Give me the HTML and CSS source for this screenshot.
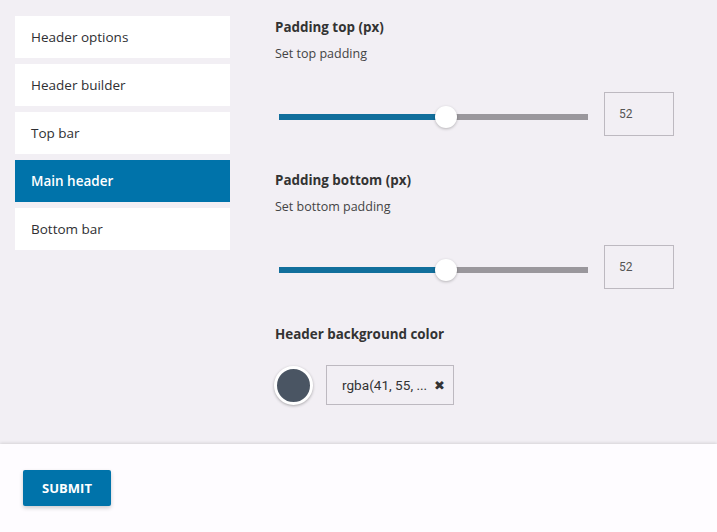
FILE: index.html
```html
<!DOCTYPE html>
<html>
<head>
<meta charset="utf-8">
<link rel="stylesheet" href="styles.css">
</head>
<body>
<div class="main">
  <nav class="sidebar">
    <div class="nav-item">Header options</div>
    <div class="nav-item">Header builder</div>
    <div class="nav-item">Top bar</div>
    <div class="nav-item active">Main header</div>
    <div class="nav-item">Bottom bar</div>
  </nav>
  <section class="content">
    <div class="field">
      <div class="label">Padding top (px)</div>
      <div class="desc">Set top padding</div>
      <div class="slider-row">
        <div class="slider">
          <div class="track"><div class="fill" style="width:54%"></div></div>
          <div class="knob" style="left:54%"></div>
        </div>
        <div class="num">52</div>
      </div>
    </div>
    <div class="field">
      <div class="label">Padding bottom (px)</div>
      <div class="desc">Set bottom padding</div>
      <div class="slider-row">
        <div class="slider">
          <div class="track"><div class="fill" style="width:54%"></div></div>
          <div class="knob" style="left:54%"></div>
        </div>
        <div class="num">52</div>
      </div>
    </div>
    <div class="field field-color">
      <div class="label">Header background color</div>
      <div class="color-row">
        <div class="swatch"></div>
        <div class="color-input"><span>rgba(41, 55, ...</span><span class="clear">✖</span></div>
      </div>
    </div>
  </section>
</div>
<footer class="footer">
  <button class="submit">SUBMIT</button>
</footer>
</body>
</html>
```
FILE: styles.css
```css
html, body {
  margin: 0;
  padding: 0;
}
body {
  background: #f2eff4;
  font-family: "Open Sans", "Noto Sans", sans-serif;
  color: #333;
  width: 717px;
  height: 532px;
  overflow: hidden;
}
.main {
  display: flex;
  height: 444px;
  padding: 16px 0 0 15px;
  box-sizing: border-box;
}
.sidebar {
  width: 215px;
  display: flex;
  flex-direction: column;
  gap: 6px;
}
.nav-item {
  height: 42px;
  background: #fff;
  display: flex;
  align-items: center;
  padding-left: 16px;
  font-size: 13.5px;
  color: #2f2f33;
}
.nav-item.active {
  background: #0073aa;
  color: #fff;
  font-weight: 600;
}
.content {
  margin-left: 45px;
  padding-top: 2px;
  width: 400px;
}
.field {
  margin-bottom: 35px;
}
.field-color {
  padding-top: 1px;
}
.label {
  font-size: 13.4px;
  font-weight: 700;
  line-height: 18px;
  color: #333;
}
.desc {
  font-size: 12.5px;
  line-height: 18px;
  margin-top: 9px;
  color: #444;
}
.slider-row {
  display: flex;
  align-items: center;
  margin-top: 29px;
}
.slider {
  position: relative;
  width: 309px;
  height: 22px;
  margin-left: 4px;
  margin-top: 6px;
}
.track {
  position: absolute;
  left: 0;
  right: 0;
  top: 8px;
  height: 6px;
  background: #9a979c;
}
.fill {
  height: 100%;
  background: #126f9c;
}
.knob {
  position: absolute;
  top: 0;
  width: 22px;
  height: 22px;
  margin-left: -11px;
  border-radius: 50%;
  background: #fff;
  box-shadow: 0 1px 3px rgba(0,0,0,0.25);
}
.num {
  margin-left: 16px;
  width: 70px;
  height: 44px;
  box-sizing: border-box;
  border: 1px solid #bdb9c0;
  font-family: Roboto, "Liberation Sans", sans-serif;
  font-size: 12px;
  color: #555;
  display: flex;
  align-items: center;
  padding-left: 14px;
}
.color-row {
  display: flex;
  align-items: center;
  margin-top: 22px;
}
.swatch {
  width: 33px;
  height: 33px;
  border-radius: 50%;
  background: #4a5563;
  border: 3px solid #fff;
  box-shadow: 0 1px 3px rgba(0,0,0,0.3);
  margin-left: -1px;
}
.color-input {
  margin-left: 13px;
  width: 128px;
  height: 40px;
  box-sizing: border-box;
  border: 1px solid #bdb9c0;
  display: flex;
  align-items: center;
  padding-left: 15px;
  font-family: Roboto, "Liberation Sans", sans-serif;
  font-size: 13.6px;
  color: #333;
}
.clear {
  margin-left: 7px;
  font-size: 12.5px;
  color: #333;
}
.footer {
  height: 88px;
  background: #fefcff;
  box-shadow: 0 -1px 3px rgba(0,0,0,0.12);
  padding: 26px 0 0 23px;
  box-sizing: border-box;
}
.submit {
  width: 88px;
  height: 36px;
  background: #0073aa;
  color: #fff;
  border: none;
  border-radius: 2px;
  font-family: "Open Sans", sans-serif;
  font-weight: 700;
  font-size: 13px;
  box-shadow: 0 2px 4px rgba(0,0,0,0.2);
  padding: 0;
}
```
